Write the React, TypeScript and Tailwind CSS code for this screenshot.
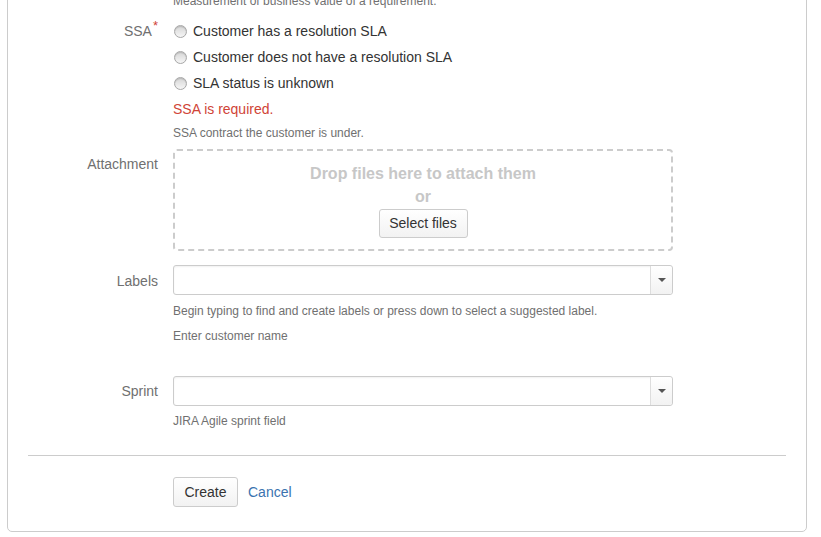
import React from "react";

const radios = [
  "Customer has a resolution SLA",
  "Customer does not have a resolution SLA",
  "SLA status is unknown",
];

function Radio({ label }: { label: string }) {
  return (
    <label className="flex items-center h-[20px] text-[14px] text-[#333]">
      <span className="w-[13px] h-[13px] rounded-full border border-[#a7a7a7] bg-gradient-to-b from-[#d6d6d6] to-[#f6f6f6] shadow-[inset_0_1px_1px_rgba(0,0,0,0.15)] ml-[1px] mr-[6px]" />
      {label}
    </label>
  );
}

function Select() {
  return (
    <div className="flex h-[30px] w-[500px] border border-[#ccc] rounded-[3px] bg-white shadow-[inset_0_1px_2px_rgba(0,0,0,0.06)]">
      <div className="flex-1" />
      <div className="w-[22px] border-l border-[#ddd] bg-gradient-to-b from-[#fff] to-[#f2f2f2] rounded-r-[3px] flex items-center justify-center">
        <span className="w-0 h-0 border-l-[4px] border-r-[4px] border-t-[4px] border-l-transparent border-r-transparent border-t-[#555]" />
      </div>
    </div>
  );
}

function Label({ children }: { children: React.ReactNode }) {
  return (
    <div className="w-[150px] shrink-0 text-right text-[14px] leading-[20px] text-[#707070]">
      {children}
    </div>
  );
}

export default function App() {
  return (
    <div className="h-[537px] overflow-hidden bg-white font-['Liberation_Sans',Arial,sans-serif]">
      <div className="ml-[7px] mr-[14px] -mt-[20px] pt-[12px] pb-[24px] border border-[#ccc] rounded-[5px]">
        <div className="ml-[165px] text-[12px] leading-[16px] text-[#707070]">
          Measurement of business value of a requirement.
        </div>

        <div className="flex mt-[12px]">
          <Label>
            SSA<span className="text-[#d04437] text-[13px] align-top relative -top-[5px] ml-[1px]">*</span>
          </Label>
          <div className="ml-[15px] flex flex-col">
            <div className="flex flex-col gap-[6px]">
              {radios.map((r) => (
                <Radio key={r} label={r} />
              ))}
            </div>
            <div className="mt-[6px] text-[14px] leading-[20px] text-[#d04437]">SSA is required.</div>
            <div className="mt-[6px] text-[12px] leading-[16px] text-[#707070]">
              SSA contract the customer is under.
            </div>
          </div>
        </div>

        <div className="flex mt-[8px]">
          <div className="pt-[5px]">
            <Label>Attachment</Label>
          </div>
          <div className="ml-[15px] w-[500px] h-[102px] border-2 border-dashed border-[#ccc] rounded-[4px] flex flex-col items-center pt-[13px]">
            <div className="text-[16px] leading-[20px] font-bold text-[#c7c7c7]">Drop files here to attach them</div>
            <div className="mt-[3px] text-[16px] leading-[20px] font-bold text-[#c7c7c7]">or</div>
            <button className="mt-[2px] h-[29px] w-[89px] border border-[#ccc] rounded-[3px] bg-gradient-to-b from-[#fff] to-[#f2f2f2] text-[14px] text-[#333]">
              Select files
            </button>
          </div>
        </div>

        <div className="flex mt-[14px]">
          <div className="pt-[6px]">
            <Label>Labels</Label>
          </div>
          <div className="ml-[15px] flex flex-col">
            <Select />
            <div className="mt-[8px] text-[12px] leading-[16px] text-[#707070]">
              Begin typing to find and create labels or press down to select a suggested label.
            </div>
            <div className="mt-[9px] text-[12px] leading-[16px] text-[#707070]">Enter customer name</div>
          </div>
        </div>

        <div className="flex mt-[32px]">
          <div className="pt-[5px]">
            <Label>Sprint</Label>
          </div>
          <div className="ml-[15px] flex flex-col">
            <Select />
            <div className="mt-[7px] text-[12px] leading-[16px] text-[#707070]">JIRA Agile sprint field</div>
          </div>
        </div>

        <div className="mx-[20px] mt-[26px] border-t border-[#ccc]" />

        <div className="flex items-center ml-[165px] mt-[21px]">
          <button className="h-[30px] w-[65px] border border-[#ccc] rounded-[3px] bg-gradient-to-b from-[#fff] to-[#f2f2f2] text-[14px] text-[#333]">
            Create
          </button>
          <a className="ml-[10px] text-[14px] text-[#3b73af]">Cancel</a>
        </div>
      </div>
    </div>
  );
}
